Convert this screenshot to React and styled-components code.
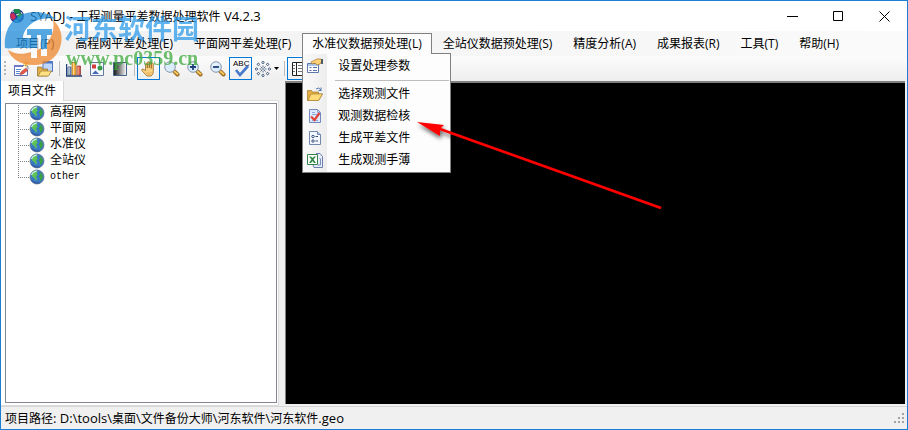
import React from "react";
import styled, { createGlobalStyle, css } from "styled-components";

const GlobalStyle = createGlobalStyle`
  * { box-sizing: border-box; }
  html, body, #root { height: 100%; }
  body {
    margin: 0;
    overflow: hidden;
    font: 12px/16px "Open Sans", "Noto Sans CJK SC", sans-serif;
    color: #000;
  }
  button { font: inherit; color: inherit; background: none; border: 0; padding: 0; }
  svg { display: block; }
`;

const Window = styled.div`
  position: relative;
  display: flex;
  flex-direction: column;
  height: 100vh;
  border: 1px solid #1a7fd4;
  background: #f0f0f0;
`;

const TitleBar = styled.header`
  display: flex;
  align-items: center;
  height: 30px;
  padding-left: 8px;
  background: #fff;
`;

const Title = styled.h1`
  flex: 1;
  margin: 0 0 0 5px;
  font-size: 12px;
  font-weight: 400;
  white-space: nowrap;
`;

const Latin = styled.span`
  font-size: 13px;
`;

const WindowButton = styled.button`
  display: grid;
  place-items: center;
  width: 46px;
  height: 28px;
`;

const MenuBar = styled.nav`
  display: flex;
  gap: 1px;
  height: 25px;
  padding: 2px 0 0 5px;
  background: linear-gradient(90deg, #f1f1f1, #fafafa);
`;

const MenuEntry = styled.div`
  position: relative;
`;

const MenuButton = styled.button`
  height: 21px;
  padding: 0 9px;
  border: 1px solid transparent;
  border-bottom: 0;
  white-space: nowrap;
  ${(p) =>
    p.$open &&
    css`
      position: relative;
      z-index: 3;
      background: #fcfcfc;
      border-color: #808080;
    `}
`;

const Dropdown = styled.div`
  position: absolute;
  z-index: 2;
  top: 20px;
  left: 0;
  width: 149px;
  padding: 1px 0 1px 2px;
  border: 1px solid #808080;
  background: linear-gradient(90deg, #fafafa, #ededed 24px, #fdfdfd 24px);
`;

const DropdownItem = styled.button`
  display: flex;
  align-items: center;
  gap: 15px;
  width: 100%;
  height: 22px;
  padding-left: 2px;
  white-space: nowrap;
`;

const DropdownRule = styled.hr`
  margin: 3px 1px 2px 30px;
  border: 0;
  border-top: 1px solid #bdbdbd;
`;

const ToolBar = styled.div`
  display: flex;
  align-items: center;
  height: 25px;
  padding-left: 3px;
  border-radius: 0 3px 3px 0;
  background: linear-gradient(#fcfcfc, #eeeeee);
`;

const Grip = styled.span`
  width: 2px;
  height: 15px;
  margin-right: 4px;
  background: repeating-linear-gradient(#b5b5b5 0 2px, transparent 2px 4px);
`;

const ToolButton = styled.button`
  display: flex;
  align-items: center;
  justify-content: center;
  gap: 3px;
  flex: none;
  width: ${(p) => (p.$wide ? 29 : 23)}px;
  height: 23px;
  border: 1px solid ${(p) => (p.$pressed ? "#0078d7" : "transparent")};
`;

const ToolRule = styled.span`
  width: 1px;
  height: 15px;
  margin: 0 2px 0 3px;
  background: #bdbdbd;
`;

const Workspace = styled.main`
  display: flex;
  flex: 1;
  min-height: 0;
  gap: 6px;
  padding-right: 2px;
`;

const SidePanel = styled.section`
  display: flex;
  flex-direction: column;
  flex: 0 0 278px;
`;

const TabStrip = styled.div`
  height: 19px;
`;

const Tab = styled.button`
  position: relative;
  height: 20px;
  padding: 0 7px;
  border-right: 1px solid #d9d9d9;
  background: #fff;
`;

const TabPage = styled.div`
  display: flex;
  flex: 1;
  min-height: 0;
  padding: 2px 1px 2px 4px;
  border: solid #dcdcdc;
  border-width: 1px 1px 1px 0;
  background: #fff;
`;

const Tree = styled.ul`
  flex: 1;
  margin: 0;
  padding: 1px 0 0 12px;
  border: 1px solid #828790;
  list-style: none;
  font-family: "Liberation Mono", "Noto Sans CJK SC", monospace;
`;

const TreeItem = styled.li`
  display: flex;
  align-items: center;
  height: 16px;
  font-size: ${(p) => (p.$latin ? 10 : 12)}px;
`;

const TreeLabel = styled.span`
  margin-left: 5px;
`;

const Canvas = styled.section`
  flex: 1;
  margin-bottom: 2px;
  border: solid #808080;
  border-width: 2px 0 0 1px;
  background: #000;
`;

const StatusBar = styled.footer`
  display: flex;
  align-items: center;
  justify-content: space-between;
  height: 23px;
  padding: 0 2px 0 4px;
  border-top: 1px solid #d7d7d7;
  white-space: nowrap;
`;

const ArrowMark = styled.svg`
  position: absolute;
  z-index: 5;
  top: 111px;
  left: 409px;
  pointer-events: none;
`;

const Watermark = styled.div`
  position: absolute;
  z-index: 4;
  top: 9px;
  left: 2px;
  display: flex;
  gap: 1px;
  opacity: 0.75;
  pointer-events: none;
`;

const WatermarkText = styled.div`
  padding-top: 2px;
  white-space: nowrap;
`;

const SiteName = styled.div`
  font: 700 27px/32px "Noto Sans CJK SC", sans-serif;
  color: #2e9bea;
`;

const SiteAddress = styled.div`
  padding-left: 2px;
  font: 700 20px/28px "Liberation Serif", serif;
  color: #3daa3d;
`;

const Icon = ({ children, size = 16 }) => (
  <svg width={size} height={size} viewBox="0 0 16 16" aria-hidden="true">
    {children}
  </svg>
);

const Globe = () => (
  <Icon>
    <circle cx="8" cy="8" r="7" fill="#3c79c4" stroke="#64788c" strokeWidth=".8" />
    <path d="M3 3.5 6 1.8l2.5.5-1 2 1.5 1L7 7.5l1 2L7 12 5.5 9 3 7.5z" fill="#5bc455" />
    <path d="m10.5 3 2.6 2 .6 3-1.2 3-1.5 1 .2-2.5-1.5-2 1.5-2z" fill="#3aa53c" />
    <path d="M2.5 6Q4 2.5 8 2" fill="none" stroke="#d5f2f2" strokeWidth="1.2" />
    <path d="M2.5 11.5q3 3.5 8 2.5" fill="none" stroke="#274b94" />
  </Icon>
);

const AppIcon = () => (
  <Icon>
    <circle cx="8" cy="8" r="7" fill="#24318e" />
    <path d="M5 1h5l2 3-3 2-4-1z" fill="#19864a" />
    <path d="m1 6 4-1 2 4-2 3-3-1z" fill="#c92d5a" />
    <path d="m8 7 3-2 3 2-2 4-3 1z" fill="#26a04c" />
    <path d="m5 12 4 0 1 3-4-1z" fill="#4ab5ba" />
    <path d="m3 4 2-1m7 1 1 2M7 7l3-1" stroke="#ddd" />
  </Icon>
);

const Form = () => (
  <Icon>
    <path d="M.5 4.5h13v10H.5z" fill="#fff" stroke="#5d72b5" />
    <path d="M0 4h9v2H0z" fill="#6f79c9" />
    <path d="M2 8.5h5M2 10.5h4M2 12.5h4" stroke="#5e88d3" />
    <path d="m7 11 5-4 2 2-5 4-3 .5z" fill="#ea5748" stroke="#a43939" strokeWidth=".6" />
    <path d="m12 7 2-1.5 1.5 1.5L14 9z" fill="#b8bfd4" />
    <path d="m9.500 .5 5 5m-5 0 5-5M12 0v6.500M9 3h7" stroke="#f3c653" />
  </Icon>
);

const OpenFolder = () => (
  <Icon>
    <path d="M.5 14.500V4.500h4l1 1.500h6v2h4l-4 6.500z" fill="#e4ae45" stroke="#9e7526" strokeWidth=".7" />
    <path d="m1 14.500 3-6.500h11.500l-4 6.500z" fill="#ffdc78" stroke="#aa8130" strokeWidth=".7" />
    <path d="M9 3q3-2.500 5 1V1.500m.5 3H11.500" fill="none" stroke="#527ab0" />
  </Icon>
);

const FolderWindow = () => (
  <Icon>
    <path d="M6 .5h9.500v10H6z" fill="#c1d6fb" stroke="#5274bd" />
    <path d="M6 .5h9.500v2H6z" fill="#4b77c3" />
    <path d="M.5 15V6h4l1 2h5v3h3l-3 4z" fill="#e0ae44" stroke="#8f6d29" strokeWidth=".7" />
    <path d="m1 15 3-5h10.500l-3 5z" fill="#ffe083" stroke="#a37d2c" strokeWidth=".7" />
  </Icon>
);

const BarChart = () => (
  <Icon>
    <path d="M.5 3v12H16" fill="none" stroke="#234279" strokeWidth="1.500" />
    <path d="M2 6h3v8H2z" fill="#7ca6e6" stroke="#234279" strokeWidth=".7" />
    <path d="M6 1.500h4V14H6z" fill="#f7b33c" stroke="#a46520" strokeWidth=".7" />
    <path d="M11 5h3.500v9H11z" fill="#df5d45" stroke="#812f2b" strokeWidth=".7" />
    <path d="M3 6v8M7.500 2v12M12 5.500V14" stroke="#f8e2b9" strokeWidth=".8" />
  </Icon>
);

const Shapes = () => (
  <Icon>
    <path d="M1.500 1.500h13v13h-13z" fill="#f5f9ff" stroke="#65789e" />
    <path d="M3 3.500h4v4H3z" fill="#d33b3d" />
    <circle cx="11" cy="7" r="2.500" fill="#379a48" />
    <path d="m3 13 3.500-3.500L10 13z" fill="#4167b2" />
  </Icon>
);

const Gradient = () => (
  <Icon>
    <defs>
      <linearGradient id="shade">
        <stop stopColor="#111" />
        <stop offset="1" stopColor="#fff" />
      </linearGradient>
    </defs>
    <path d="M1.500 1.500h13v13h-13z" fill="url(#shade)" stroke="#48628e" />
  </Icon>
);

const Hand = () => (
  <Icon>
    <path
      d="M4.500 9.500V3.500q0-1 .9-1t.9 1V7 1.800q0-1 1-1t1 1V7 1.700q0-1 1-1t1 1V7.500 3q0-1 1-1t1 1v7.500q0 3-2.200 4.500H6L1 9.800Q.2 8 2 8z"
      fill="#fbd180"
      stroke="#976a25"
      strokeWidth=".8"
    />
    <path d="M5 12h6m-5 2h4" stroke="#dfa34b" strokeWidth=".7" />
  </Icon>
);

const Magnifier = ({ sign }) => (
  <Icon>
    <path d="m10.500 10.500 3 3" stroke="#a06d26" strokeWidth="4" strokeLinecap="round" />
    <path d="m10.500 10.500 3 2.500" stroke="#f5ca61" strokeWidth="1.800" strokeLinecap="round" />
    <circle cx="6" cy="6" r="5.300" fill="#dcecff" stroke="#8797aa" />
    <path d="M3 5q1-2.500 4-2" stroke="#fff" fill="none" />
    {sign && (
      <path d={sign === "plus" ? "M3 6h6M6 3v6" : "M3 6h6"} stroke="#233f7d" strokeWidth="1.800" />
    )}
  </Icon>
);

const SpellCheck = () => (
  <svg width="18" height="18" viewBox="0 0 18 18" aria-hidden="true">
    <text x="1" y="6" fontFamily="Liberation Sans, sans-serif" fontSize="8">ABC</text>
    <path d="m4 10 4 5 8-9" fill="none" stroke="#477acc" strokeWidth="2.700" />
  </svg>
);

const Burst = () => (
  <Icon>
    {[0, 45, 90, 135, 180, 225, 270, 315].map((angle) => (
      <g key={angle} transform={`rotate(${angle} 8 8)`}>
        <circle cx="8" cy="1.500" r="1.100" fill="#fff" stroke="#344e72" strokeWidth=".9" />
        <path d="M8 4.500v2" stroke="#344e72" strokeWidth=".8" />
      </g>
    ))}
    <circle cx="8" cy="8" r=".8" fill="#344e72" />
  </Icon>
);

const Caret = () => (
  <svg width="5" height="3" viewBox="0 0 5 3" aria-hidden="true">
    <path d="M0 0h5L2.500 3z" />
  </svg>
);

const Panel = () => (
  <Icon>
    <path d="M1.500 1.500h14v13h-14z" fill="#fff" stroke="#222" />
    <path d="M5.500 1v14" stroke="#222" />
    <path d="M2 4.500h2M2 7.500h2M2 10.500h2M7 4.500h8M7 7.500h8M7 10.500h8" stroke="#777" />
  </Icon>
);

const Properties = () => (
  <Icon>
    <path d="M.5 5.500h11v9H.5z" fill="#fff" stroke="#6079aa" />
    <path d="M1 6h10v2H1z" fill="#a9c5ec" />
    <path d="M2.500 9.500h2M2.500 12.500h2M6 9.500h4M6 12.500h4" stroke="#536dab" />
    <path d="m4 4 4-2 2-1h4l1 2-2 3-3 1-2-2-3 1z" fill="#ffd275" stroke="#a37831" strokeWidth=".7" />
    <path d="M14 1h2v5h-2z" fill="#4f5c65" />
  </Icon>
);

const CheckedPage = () => (
  <Icon>
    <path d="M2.500 1.500h8l3 3v10h-11z" fill="#dfeaff" stroke="#708abf" />
    <path d="M10.500 1.500v3h3M5 4.500h3M5 6.500h6M5 12.500h6" fill="none" stroke="#8da8d8" />
    <path d="m4 8.500 3.500 3.500 5-7" fill="none" stroke="#df4338" strokeWidth="2.200" />
  </Icon>
);

const OptionsPage = () => (
  <Icon>
    <path d="M2.500 1.500h8l3 3v10h-11z" fill="#f3f7ff" stroke="#7488ad" />
    <path d="M10.500 1.500v3h3" fill="#bccde9" stroke="#7488ad" />
    <circle cx="6" cy="6.500" r="1.200" fill="none" stroke="#354f77" />
    <circle cx="6" cy="11" r="1.200" fill="none" stroke="#354f77" />
    <path d="M8.500 6.500H11M8.500 11H11" stroke="#354f77" />
  </Icon>
);

const Spreadsheet = () => (
  <Icon>
    <path d="M9 1.500h4l2.500 3v11H7l-1-3" fill="#e7edf9" stroke="#6b7ead" />
    <path d="M.5 2.500h10v10H.5z" fill="#fff" stroke="#378246" />
    <path d="M2 4.500h2L5.500 6 7 4.500h2L6.500 7.500 9 11H7L5.500 9 4 11H2l2.500-3.500z" fill="#2f8542" />
    <path d="m12.500 6 1 1v6h-3" fill="none" stroke="#7c91be" />
  </Icon>
);

const MENUS = [
  "项目(P)",
  "高程网平差处理(E)",
  "平面网平差处理(F)",
  "水准仪数据预处理(L)",
  "全站仪数据预处理(S)",
  "精度分析(A)",
  "成果报表(R)",
  "工具(T)",
  "帮助(H)",
];

const FILE_ACTIONS = [
  ["选择观测文件", OpenFolder],
  ["观测数据检核", CheckedPage],
  ["生成平差文件", OptionsPage],
  ["生成观测手薄", Spreadsheet],
];

const NODES = ["高程网", "平面网", "水准仪", "全站仪", "other"];

const LevelMenu = () => (
  <Dropdown role="menu">
    <DropdownItem role="menuitem">
      <Properties />
      设置处理参数
    </DropdownItem>
    <DropdownRule />
    {FILE_ACTIONS.map(([label, Glyph]) => (
      <DropdownItem role="menuitem" key={label}>
        <Glyph />
        {label}
      </DropdownItem>
    ))}
  </Dropdown>
);

const Branch = ({ last }) => (
  <svg width="11" height="16" viewBox="0 0 11 16" aria-hidden="true">
    <path d={last ? "M.5 0v8" : "M.5 0v16"} stroke="#808080" strokeDasharray="1 1" />
    <path d="M0 8.500h11" stroke="#808080" strokeDasharray="1 1" />
  </svg>
);

const SizeGrip = () => (
  <svg width="12" height="12" viewBox="0 0 12 12" aria-hidden="true">
    <path d="M9 1h2v2H9zM5 5h2v2H5zm4 0h2v2H9zM1 9h2v2H1zm4 0h2v2H5zm4 0h2v2H9z" fill="#a3a3a3" />
  </svg>
);

const SiteLogo = () => (
  <svg width="60" height="58" viewBox="0 0 60 58" aria-hidden="true">
    <circle cx="30" cy="29" r="24" fill="#fff" opacity=".8" />
    <path d="M2 38C0 17 13 2 32 2c9 0 16 3 21 7-9-2-19 0-25 5-5 4-8 9-8 14h8v10H14c-5 0-8 1-12 0z" fill="#218edb" />
    <path d="M24 19h25v6h-5v14h-6V25h-4v13h-6V25h-4z" fill="#218edb" />
    <path d="M50 10c7 6 10 15 8 24-3 14-14 21-27 21C18 55 8 49 5 40c6 4 14 5 23 2v6h6v-8l4-2v8h6V33c4-5 8-13 6-23z" fill="#ef872d" />
  </svg>
);

export default function App() {
  return (
    <>
      <GlobalStyle />
      <Window>
        <TitleBar>
          <AppIcon />
          <Title>
            <Latin>SYADJ - </Latin>工程测量平差数据处理软件<Latin> V4.2.3</Latin>
          </Title>
          <WindowButton aria-label="最小化">
            <svg width="11" height="11"><path d="M0 5.500h11" stroke="#000" /></svg>
          </WindowButton>
          <WindowButton aria-label="最大化">
            <svg width="11" height="11"><path d="M.5.5h9v9h-9z" fill="none" stroke="#000" /></svg>
          </WindowButton>
          <WindowButton aria-label="关闭">
            <svg width="11" height="11"><path d="m.5.5 10 10m0-10-10 10" stroke="#000" /></svg>
          </WindowButton>
        </TitleBar>

        <MenuBar>
          {MENUS.map((label, i) => (
            <MenuEntry key={label}>
              <MenuButton $open={i === 3} aria-expanded={i === 3}>{label}</MenuButton>
              {i === 3 && <LevelMenu />}
            </MenuEntry>
          ))}
        </MenuBar>

        <ToolBar role="toolbar">
          <Grip />
          <ToolButton aria-label="新建"><Form /></ToolButton>
          <ToolButton aria-label="打开"><FolderWindow /></ToolButton>
          <ToolRule />
          <ToolButton aria-label="图表"><BarChart /></ToolButton>
          <ToolButton aria-label="图形"><Shapes /></ToolButton>
          <ToolButton aria-label="灰度"><Gradient /></ToolButton>
          <ToolRule />
          <ToolButton $pressed aria-label="平移"><Hand /></ToolButton>
          <ToolButton aria-label="缩放"><Magnifier /></ToolButton>
          <ToolButton aria-label="放大"><Magnifier sign="plus" /></ToolButton>
          <ToolButton aria-label="缩小"><Magnifier sign="minus" /></ToolButton>
          <ToolButton $pressed aria-label="注记"><SpellCheck /></ToolButton>
          <ToolButton $wide aria-label="点样式"><Burst /><Caret /></ToolButton>
          <ToolRule />
          <ToolButton $pressed aria-label="面板"><Panel /></ToolButton>
        </ToolBar>

        <Workspace>
          <SidePanel>
            <TabStrip role="tablist">
              <Tab role="tab" aria-selected="true">项目文件</Tab>
            </TabStrip>
            <TabPage role="tabpanel">
              <Tree role="tree">
                {NODES.map((label, i) => (
                  <TreeItem role="treeitem" key={label} $latin={label === "other"}>
                    <Branch last={i === NODES.length - 1} />
                    <Globe />
                    <TreeLabel>{label}</TreeLabel>
                  </TreeItem>
                ))}
              </Tree>
            </TabPage>
          </SidePanel>
          <Canvas aria-label="绘图区" />
        </Workspace>

        <StatusBar>
          <span>
            项目路径<Latin>: D:\tools\</Latin>桌面<Latin>\</Latin>文件备份大师<Latin>\</Latin>河东软件<Latin>\</Latin>河东软件<Latin>.geo</Latin>
          </span>
          <SizeGrip />
        </StatusBar>

        <Watermark>
          <SiteLogo />
          <WatermarkText>
            <SiteName>河东软件园</SiteName>
            <SiteAddress>www.pc0359.cn</SiteAddress>
          </WatermarkText>
        </Watermark>

        <ArrowMark width="256" height="102" viewBox="0 0 256 102" aria-hidden="true">
          <defs>
            <filter id="shadow" x="-20%" y="-20%" width="140%" height="150%">
              <feDropShadow dx="1" dy="3" stdDeviation="2" floodOpacity=".6" />
            </filter>
          </defs>
          <g filter="url(#shadow)">
            <path d="m30 17 221 79" stroke="#f00" strokeWidth="2.600" />
            <path d="m7 10 27 3-4 4v7z" fill="#f00" />
          </g>
        </ArrowMark>
      </Window>
    </>
  );
}
